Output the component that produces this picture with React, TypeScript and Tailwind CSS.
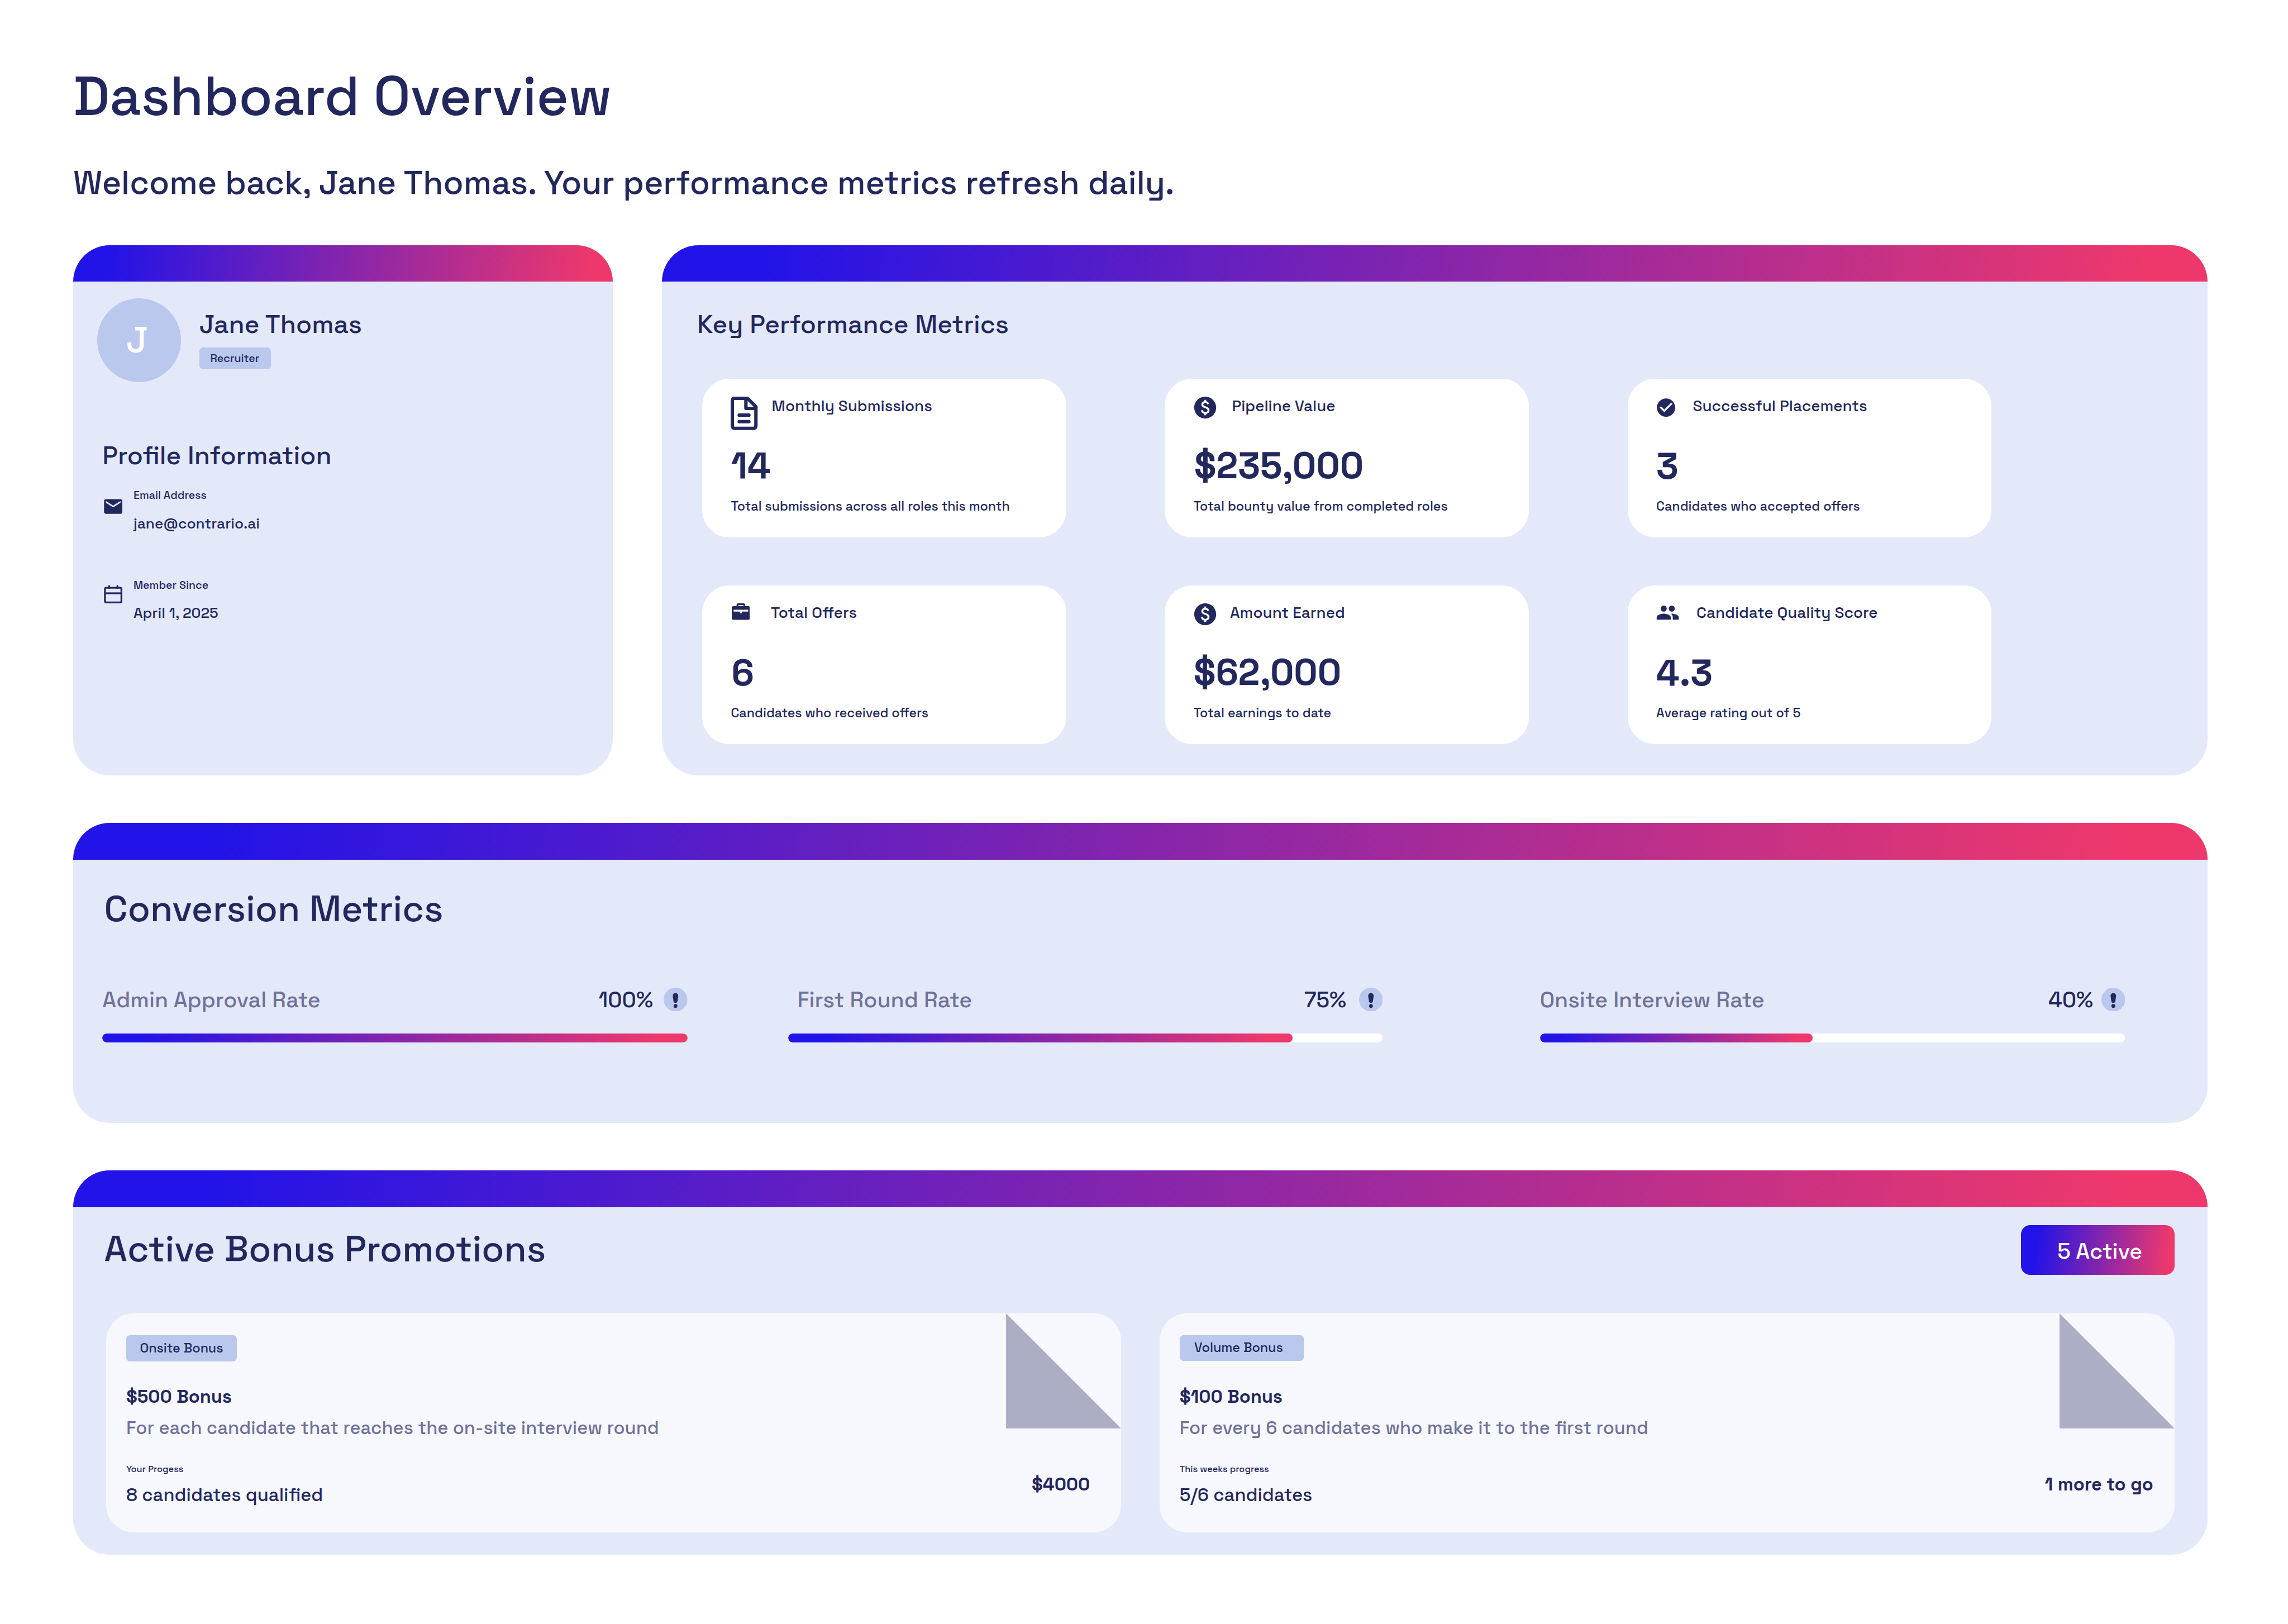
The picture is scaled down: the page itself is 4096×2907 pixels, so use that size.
import type { ReactNode } from 'react';
import { MdCheckCircle, MdEmail, MdPaid, MdPeople } from 'react-icons/md';

function CalendarIcon() {
  return (
    <svg viewBox="0 0 24 24" className="mt-[6.2px] size-6 shrink-0" fill="none" stroke="currentColor" strokeWidth="2">
      <rect x="3" y="5" width="18" height="16" rx="1.4" />
      <path d="M3 11h18" />
      <path d="M7.6 5V3M16.6 5V3" strokeLinecap="round" />
    </svg>
  );
}

function DocumentIcon() {
  return (
    <svg
      viewBox="0 0 59 73"
      className="h-[36.5px] w-[29.5px]"
      fill="none"
      stroke="currentColor"
      strokeWidth="7.4"
      strokeLinejoin="round"
    >
      <path d="M37 3.7H8.5a4.8 4.8 0 0 0-4.8 4.8v56a4.8 4.8 0 0 0 4.8 4.8h42a4.8 4.8 0 0 0 4.8-4.8V21.8Z" />
      <path d="M33.4 4v21.6H55" />
      <path d="M18.7 40.5H40M18.7 54.7H40" strokeLinecap="round" />
    </svg>
  );
}

function BriefcaseIcon() {
  return (
    <svg viewBox="0 0 40 36" className="ml-[0.7px] h-[18px] w-5">
      <path
        fill="currentColor"
        fillRule="evenodd"
        d="M10.5 6V4a4 4 0 0 1 4-4h11a4 4 0 0 1 4 4v2H36a4 4 0 0 1 4 4v22a4 4 0 0 1-4 4H4a4 4 0 0 1-4-4V10a4 4 0 0 1 4-4Zm4 0h11V4.6a.8.8 0 0 0-.8-.8h-9.4a.8.8 0 0 0-.8.8Z"
      />
      <path
        fill="#fff"
        d="M4.8 14.2h30.4a.9.9 0 0 1 .9.9V17a.9.9 0 0 1-.9.9H22v2.2a2 2 0 0 1-4 0v-2.2H4.8a.9.9 0 0 1-.9-.9v-1.9a.9.9 0 0 1 .9-.9Z"
      />
    </svg>
  );
}

function AlertBadge() {
  return (
    <svg viewBox="0 0 26 26" className="size-[26px]">
      <circle cx="13" cy="13" r="13" fill="#bac8ee" />
      <path
        fill="#22285e"
        d="M13 6c1.9 0 3.1 1.3 3 3.2l-.8 5.4c-.2 1.3-1 1.9-2.2 1.9s-2-.6-2.2-1.9L10 9.200C9.900 7.300 11.100 6 13 6Z"
      />
      <circle cx="13" cy="20" r="2.1" fill="#22285e" />
    </svg>
  );
}

// slot is the width between the card padding and the label
const metrics = [
  {
    icon: <DocumentIcon />,
    slot: 'w-[44.7px]',
    label: 'Monthly Submissions',
    value: '14',
    valueClass: 'pt-[0.4px]',
    note: 'Total submissions across all roles this month',
  },
  {
    icon: <MdPaid className="-mt-[2.4px] -ml-[1.7px] size-[28.8px]" />,
    slot: 'w-[42px]',
    label: 'Pipeline Value',
    value: '$235,000',
    valueClass: 'pt-[0.4px] pl-[0.6px]',
    note: 'Total bounty value from completed roles',
  },
  {
    icon: <MdCheckCircle className="-ml-[1.3px] size-6" />,
    slot: 'w-10',
    label: 'Successful Placements',
    value: '3',
    valueClass: 'pt-[1.2px]',
    note: 'Candidates who accepted offers',
  },
  {
    icon: <BriefcaseIcon />,
    slot: 'w-[43.8px]',
    label: 'Total Offers',
    value: '6',
    valueClass: 'pt-[1.2px] pl-[0.6px]',
    note: 'Candidates who received offers',
  },
  {
    icon: <MdPaid className="-mt-[2.4px] -ml-[1.7px] size-[28.8px]" />,
    slot: 'w-[39.9px]',
    label: 'Amount Earned',
    value: '$62,000',
    valueClass: 'pt-[0.4px]',
    note: 'Total earnings to date',
  },
  {
    icon: <MdPeople className="-mt-[3.2px] -ml-[0.5px] size-[26.4px]" />,
    slot: 'w-11',
    label: 'Candidate Quality Score',
    value: '4.3',
    valueClass: 'pt-[1.2px]',
    note: 'Average rating out of 5',
  },
];

const rates = [
  { label: 'Admin Approval Rate', value: '100%', fill: 100, width: 'w-[640px]', labelClass: '', valueClass: 'mr-[11.9px]' },
  {
    label: 'First Round Rate',
    value: '75%',
    fill: 84.9,
    width: 'ml-[110px] w-[650px]',
    labelClass: 'ml-2.5',
    valueClass: 'mr-[13.7px]',
  },
  {
    label: 'Onsite Interview Rate',
    value: '40%',
    fill: 46.6,
    width: 'ml-[172px] w-[640px]',
    labelClass: '',
    valueClass: 'mr-[9px]',
  },
];

const promotions = [
  {
    tag: 'Onsite Bonus',
    tagClass: 'h-[29px] w-[121px] pl-[15px]',
    title: '$500 Bonus',
    text: 'For each candidate that reaches the on-site interview round',
    caption: 'Your Progess',
    progress: '8 candidates qualified',
    result: '$4000',
    resultClass: 'mr-[34px]',
  },
  {
    tag: 'Volume Bonus',
    tagClass: 'h-7 w-[136px] pl-4',
    title: '$100 Bonus',
    text: 'For every 6 candidates who make it to the first round',
    caption: 'This weeks progress',
    progress: '5/6 candidates',
    result: '1 more to go',
    resultClass: 'mr-[23.2px]',
  },
];

function Panel({ className, children }: { className: string; children: ReactNode }) {
  return (
    <section className={`overflow-hidden rounded-[40px] bg-[#e4e9fa] ${className}`}>
      <div className="h-10 bg-[linear-gradient(98deg,#2213e8_6.5%,#ee386c_96%)]" />
      {children}
    </section>
  );
}

function ProfileRow({ icon, label, value }: { icon: ReactNode; label: string; value: string }) {
  return (
    <div className="flex gap-2.5 pl-[6px]">
      {icon}
      <div>
        <p className="pt-[0.3px] text-xs/4">{label}</p>
        <p className="mt-[12.2px] text-base/5">{value}</p>
      </div>
    </div>
  );
}

export default function App() {
  return (
    <main className="h-[1776px] w-[2502px] overflow-hidden bg-white pt-[67.3px] pr-[88px] pl-20 font-['Space_Grotesk',Inter,sans-serif] font-medium whitespace-nowrap text-[#22285e] [zoom:1.637]">
      <h1 className="text-6xl/[76px]">Dashboard Overview</h1>
      <p className="mt-[33.1px] text-4xl/[46px]">Welcome back, Jane Thomas. Your performance metrics refresh daily.</p>

      <div className="mt-[45.6px] flex gap-[54px]">
        <Panel className="h-[580px] w-[590px]">
          <div className="px-[26px] pt-[18px]">
            <div className="flex gap-5">
              <div className="flex size-[92px] items-center justify-center rounded-full bg-[#bac8ee] pr-1 text-[40px] leading-none text-white">
                J
              </div>
              <div className="pt-[10.5px]">
                <h2 className="text-[28px]/9">Jane Thomas</h2>
                <div className="mt-[7.5px] flex h-6 w-[78px] items-center rounded-[4px] bg-[#bac8ee] pl-3 text-xs">Recruiter</div>
              </div>
            </div>

            <h3 className="mt-[62.2px] mb-[17.7px] pl-[6px] text-[28px]/9">Profile Information</h3>
            <ProfileRow icon={<MdEmail className="mt-[8.1px] size-6 shrink-0" />} label="Email Address" value="jane@contrario.ai" />
            <div className="h-[49.4px]" />
            <ProfileRow icon={<CalendarIcon />} label="Member Since" value="April 1, 2025" />
          </div>
        </Panel>

        <Panel className="h-[580px] w-[1690px]">
          <h3 className="pt-[28.4px] pl-[38.4px] text-[28px]/9">Key Performance Metrics</h3>
          <div className="mt-[41.6px] ml-11 grid grid-cols-[398px_398px_398px] gap-x-[108px] gap-y-[52.5px]">
            {metrics.map((m) => (
              <div key={m.label} className="h-[173.5px] rounded-[30px] bg-white pt-5 pl-[31.3px]">
                <div className="flex h-[50px] items-start">
                  <div className={`shrink-0 ${m.slot}`}>{m.icon}</div>
                  <h4 className="pt-[0.6px] text-[17px]/5">{m.label}</h4>
                </div>
                <div className={`h-[50px] text-[40px]/[50px] font-bold ${m.valueClass}`}>{m.value}</div>
                <p className="mt-[10.9px] text-[14.2px]/[18px]">{m.note}</p>
              </div>
            ))}
          </div>
        </Panel>
      </div>

      <Panel className="mt-[52px] h-[328px] w-[2334px]">
        <h3 className="pt-[28.9px] pl-[34px] text-[40px]/[50px]">Conversion Metrics</h3>
        <div className="mt-[59.1px] flex pl-8">
          {rates.map((r) => (
            <div key={r.label} className={r.width}>
              <div className="flex h-[30px] items-center text-2xl/[30px]">
                <span className={`pt-[0.6px] text-[#6f7299] ${r.labelClass}`}>{r.label}</span>
                <span className={`ml-auto pt-[0.6px] ${r.valueClass}`}>{r.value}</span>
                <AlertBadge />
              </div>
              <div className="mt-[22px] h-2.5 overflow-hidden rounded-full bg-white">
                <div
                  className="h-full rounded-full bg-[linear-gradient(94deg,#2213e8_7%,#ee386c_95%)]"
                  style={{ width: `${r.fill}%` }}
                />
              </div>
            </div>
          ))}
        </div>
      </Panel>

      <Panel className="mt-[52px] h-[420px] w-[2334px]">
        <div className="flex justify-between pt-5 pr-9 pl-[34px]">
          <h3 className="pt-[0.9px] text-[40px]/[50px]">Active Bonus Promotions</h3>
          <div className="flex h-[54px] w-[168px] items-center rounded-[10px] bg-[linear-gradient(96deg,#2213e8_11%,#ee386c_95%)] pt-[1.5px] pl-10 text-2xl text-white">
            5 Active
          </div>
        </div>
        <div className="mt-[42px] flex gap-[42px] pl-9">
          {promotions.map((p) => (
            <div key={p.tag} className="flex h-[240px] w-[1110px] justify-between rounded-[30px] bg-[#f7f8fe]">
              <div className="pt-6 pl-[22px] text-xl/[26px]">
                <div className="h-[29px]">
                  <div className={`flex items-center rounded-[4px] bg-[#bac8ee] pb-[0.6px] text-[14.3px] ${p.tagClass}`}>{p.tag}</div>
                </div>
                <h4 className="mt-[25.5px] font-bold">{p.title}</h4>
                <p className="mt-2 text-[#6f7299]">{p.text}</p>
                <p className="mt-[25.5px] text-[10px]/[14px]">{p.caption}</p>
                <p className="mt-[8.2px]">{p.progress}</p>
              </div>
              <div className="flex flex-col items-end">
                <svg viewBox="0 0 126 126" className="size-[126px]">
                  <path d="M0 0v126h126Z" fill="#acaec6" />
                </svg>
                <div className={`mt-[48.6px] text-xl/[26px] font-bold ${p.resultClass}`}>{p.result}</div>
              </div>
            </div>
          ))}
        </div>
      </Panel>
    </main>
  );
}
